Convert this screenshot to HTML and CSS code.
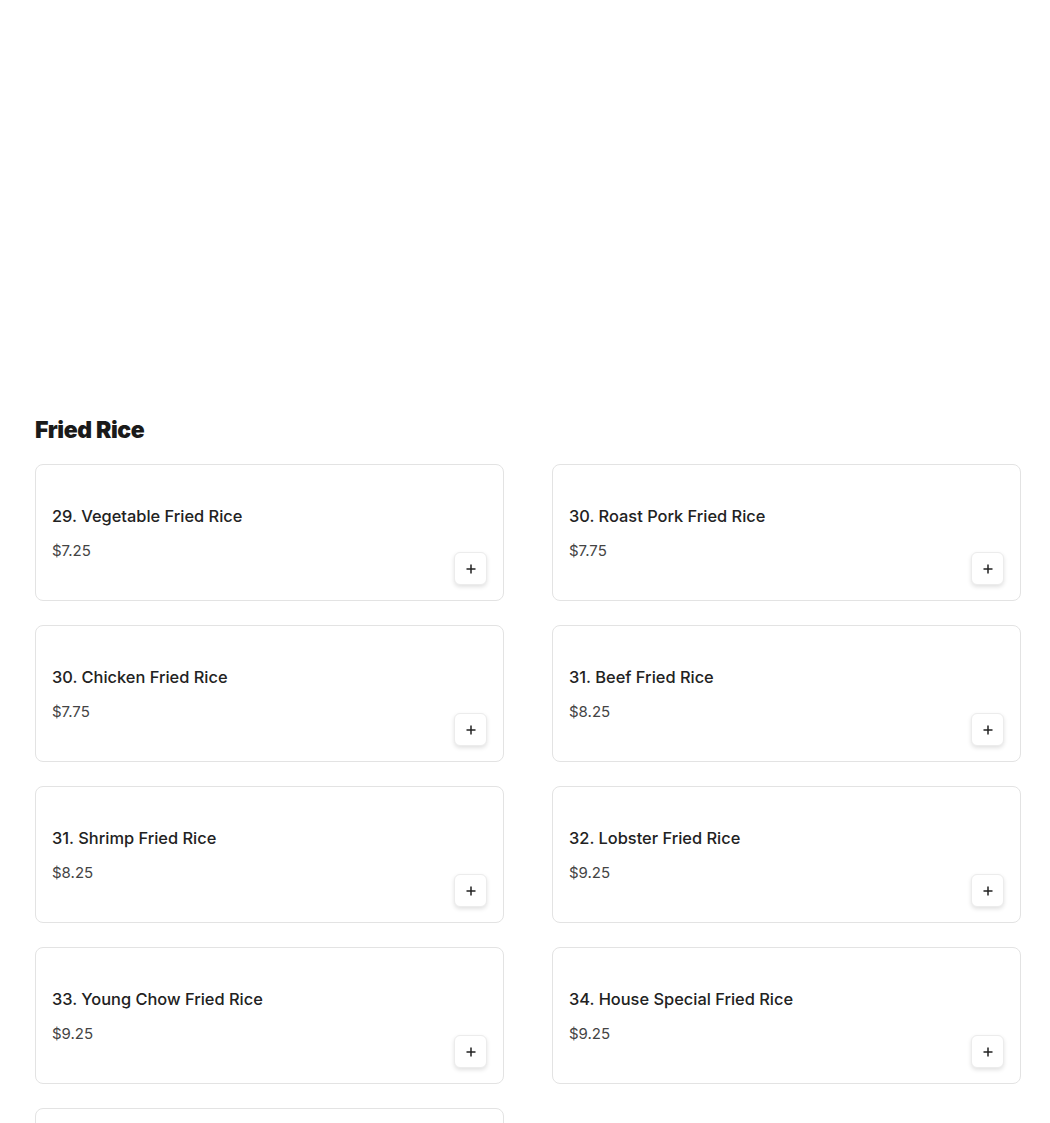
FILE: index.html
```html
<!DOCTYPE html>
<html>
<head>
<meta charset="utf-8">
<link rel="stylesheet" href="styles.css">
</head>
<body>
<div class="spacer"></div>
<section class="menu">
  <h2 class="title">Fried Rice</h2>
  <div class="grid">
    <div class="card"><div class="info"><div class="name">29. Vegetable Fried Rice</div><div class="price">$7.25</div></div><button class="add"><svg width="12" height="12" viewBox="0 0 12 12"><path d="M6 1.5v9M1.5 6h9" stroke="#222" stroke-width="1.5" fill="none"/></svg></button></div>
    <div class="card"><div class="info"><div class="name">30. Roast Pork Fried Rice</div><div class="price">$7.75</div></div><button class="add"><svg width="12" height="12" viewBox="0 0 12 12"><path d="M6 1.5v9M1.5 6h9" stroke="#222" stroke-width="1.5" fill="none"/></svg></button></div>
    <div class="card"><div class="info"><div class="name">30. Chicken Fried Rice</div><div class="price">$7.75</div></div><button class="add"><svg width="12" height="12" viewBox="0 0 12 12"><path d="M6 1.5v9M1.5 6h9" stroke="#222" stroke-width="1.5" fill="none"/></svg></button></div>
    <div class="card"><div class="info"><div class="name">31. Beef Fried Rice</div><div class="price">$8.25</div></div><button class="add"><svg width="12" height="12" viewBox="0 0 12 12"><path d="M6 1.5v9M1.5 6h9" stroke="#222" stroke-width="1.5" fill="none"/></svg></button></div>
    <div class="card"><div class="info"><div class="name">31. Shrimp Fried Rice</div><div class="price">$8.25</div></div><button class="add"><svg width="12" height="12" viewBox="0 0 12 12"><path d="M6 1.5v9M1.5 6h9" stroke="#222" stroke-width="1.5" fill="none"/></svg></button></div>
    <div class="card"><div class="info"><div class="name">32. Lobster Fried Rice</div><div class="price">$9.25</div></div><button class="add"><svg width="12" height="12" viewBox="0 0 12 12"><path d="M6 1.5v9M1.5 6h9" stroke="#222" stroke-width="1.5" fill="none"/></svg></button></div>
    <div class="card"><div class="info"><div class="name">33. Young Chow Fried Rice</div><div class="price">$9.25</div></div><button class="add"><svg width="12" height="12" viewBox="0 0 12 12"><path d="M6 1.5v9M1.5 6h9" stroke="#222" stroke-width="1.5" fill="none"/></svg></button></div>
    <div class="card"><div class="info"><div class="name">34. House Special Fried Rice</div><div class="price">$9.25</div></div><button class="add"><svg width="12" height="12" viewBox="0 0 12 12"><path d="M6 1.5v9M1.5 6h9" stroke="#222" stroke-width="1.5" fill="none"/></svg></button></div>
    <div class="card card-partial"></div>
  </div>
</section>
</body>
</html>
```
FILE: styles.css
```css
html, body {
  margin: 0;
  padding: 0;
  background: #fff;
  font-family: Inter, "Noto Sans", sans-serif;
  color: #222;
}
.spacer {
  height: 410px;
}
.menu {
  width: 986px;
  margin-left: 35px;
}
.title {
  margin: 5px 0 19px 0;
  font-size: 23px;
  line-height: 30px;
  font-weight: 900;
  letter-spacing: -0.4px;
  color: #1a1a1a;
}
.grid {
  display: grid;
  grid-template-columns: 1fr 1fr;
  column-gap: 48px;
  row-gap: 24px;
}
.card {
  box-sizing: border-box;
  height: 137px;
  border: 1px solid #e3e3e3;
  border-radius: 8px;
  padding: 0 16px 15px 16px;
  display: flex;
  justify-content: space-between;
}
.info {
  padding-top: 39px;
  display: flex;
  flex-direction: column;
  gap: 11px;
}
.name {
  font-size: 16.4px;
  line-height: 24px;
  font-weight: 500;
  color: #222;
}
.price {
  font-size: 15px;
  line-height: 24px;
  color: #444;
}
.add {
  align-self: flex-end;
  width: 33px;
  height: 33px;
  padding: 0;
  border: 1px solid #ececec;
  border-radius: 6px;
  background: #fff;
  box-shadow: 0 2px 4px rgba(0,0,0,0.12);
  display: flex;
  align-items: center;
  justify-content: center;
}
```
